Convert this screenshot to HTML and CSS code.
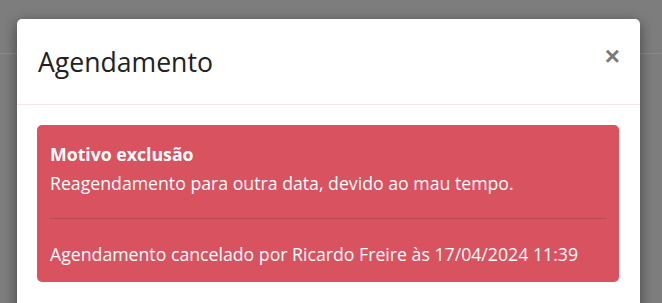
FILE: index.html
```html
<!DOCTYPE html>
<html lang="pt-BR">
<head>
    <meta charset="UTF-8">
    <meta name="viewport" content="width=device-width, initial-scale=1.0">
    <title>Agendamento</title>
    <link rel="stylesheet" href="styles.css">
</head>
<body>
    <div class="page-behind">
        <div class="page-bar"></div>
    </div>

    <div class="modal-dialog">
        <div class="modal-header">
            <h4 class="modal-title">Agendamento</h4>
            <button type="button" class="close" aria-label="Fechar">&times;</button>
        </div>
        <div class="modal-body">
            <div class="alert-danger">
                <strong class="alert-heading">Motivo exclusão</strong>
                <p>Reagendamento para outra data, devido ao mau tempo.</p>
                <hr>
                <p>Agendamento cancelado por Ricardo Freire às 17/04/2024 11:39</p>
            </div>
        </div>
    </div>
</body>
</html>
```

FILE: styles.css
```css
body {
    font-family: "Open Sans", "Noto Sans", sans-serif;
    margin: 0;
    height: 303px;
    overflow: hidden;
    background-color: #7d7d7d;
    position: relative;
}

/* the page under the backdrop, barely visible */
.page-behind {
    height: 100%;
}

.page-bar {
    height: 53px;
    border-bottom: 1px solid #8a8a8a;
}

.modal-dialog {
    position: absolute;
    top: 19px;
    left: 17px;
    width: 623px;
    height: 300px;
    background-color: #fff;
    border-radius: 5px;
    box-shadow: 0 4px 14px rgba(0, 0, 0, 0.45);
}

.modal-header {
    display: flex;
    justify-content: space-between;
    align-items: center;
    height: 85px;
    padding: 0 20px 0 21px;
    border-bottom: 1px solid #f6e3ea;
}

.modal-title {
    margin: 2px 0 0 0;
    font-size: 26.6px;
    font-weight: 400;
    color: #222;
    line-height: 1.2;
}

.close {
    background: none;
    border: none;
    padding: 0;
    margin-top: -12px;
    font-family: "Liberation Sans", sans-serif;
    font-size: 26px;
    font-weight: bold;
    line-height: 1;
    color: #7a7a7a;
    cursor: pointer;
}

.modal-body {
    padding: 20px 21px 20px 20px;
}

.alert-danger {
    background-color: #d9525f;
    color: #fff;
    border-radius: 5px;
    padding: 15px 13px 13px 13px;
    font-size: 17.7px;
    line-height: 29px;
}

.alert-heading {
    display: block;
    font-weight: 700;
}

.alert-danger p {
    margin: 0;
}

.alert-danger hr {
    border: 0;
    border-top: 1px solid rgba(0, 0, 0, 0.12);
    margin: 20px 0 21px 0;
}
```
